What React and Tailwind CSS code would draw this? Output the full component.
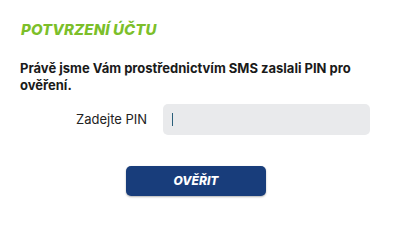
import React from "react";

export default function App() {
  return (
    <div className="w-[393px] h-[220px] bg-white px-5 pt-[21px] font-['Inter',sans-serif]">
      <h1 className="ml-[1px] text-[15px] leading-[18px] font-extrabold italic text-[#7cbf2a] tracking-[0.1px]">
        POTVRZENÍ ÚČTU
      </h1>
      <p className="mt-[21px] text-[13px] leading-[17px] font-bold text-[#1a1a1a]">
        Právě jsme Vám prostřednictvím SMS zaslali PIN pro ověření.
      </p>
      <div className="mt-[10px] flex items-center">
        <label className="ml-[56px] w-[87px] text-[13px] text-[#222]">Zadejte PIN</label>
        <div className="w-[207px] h-[31px] rounded-[5px] bg-[#e9eaec] flex items-center pl-[9px]">
          <span className="w-px h-[13px] bg-[#2a5f7a]"></span>
        </div>
      </div>
      <div className="mt-[31px] ml-[106px]">
        <button className="w-[140px] h-[30px] rounded-[5px] bg-[#183d7b] text-white text-[12px] font-extrabold italic shadow-[0_1px_2px_rgba(0,0,0,0.3)]">
          OVĚŘIT
        </button>
      </div>
    </div>
  );
}
